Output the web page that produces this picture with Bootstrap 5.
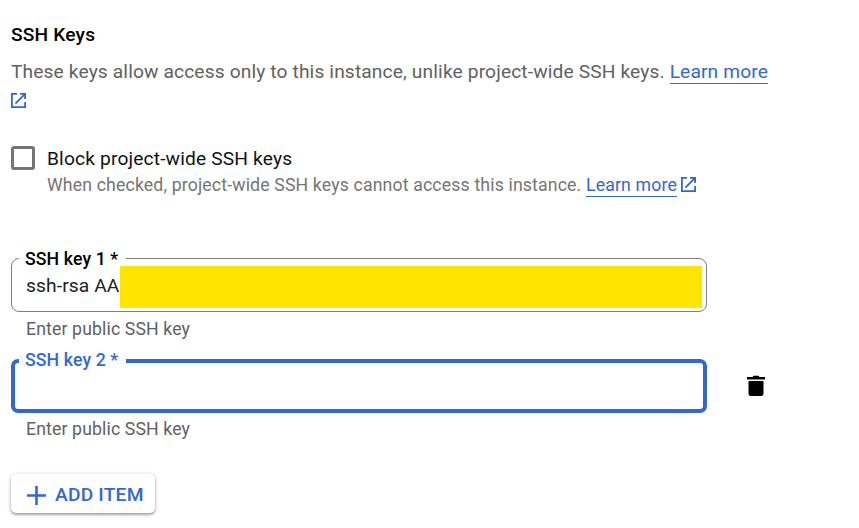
<!DOCTYPE html>
<html lang="en">
<head>
<meta charset="utf-8">
<meta name="viewport" content="width=device-width, initial-scale=1">
<title>SSH Keys</title>
<link href="https://cdn.jsdelivr.net/npm/bootstrap@5.3.0/dist/css/bootstrap.min.css" rel="stylesheet">
<style>
body{font-family:Roboto,"Liberation Sans",sans-serif;color:#000;background:#fff;font-size:19.2px}
.ssh-form{padding:20px 0 0 11px;width:780px}
.ssh-title{font-size:19.2px;font-weight:500;line-height:30px;letter-spacing:.16px}
.ssh-intro{font-size:19.2px;line-height:29px;letter-spacing:.13px;color:#616161;margin-top:7px;width:770px}
.ssh-link{color:#3367d6;text-decoration:none;border-bottom:1px solid #3367d6}
.open-icon{fill:#3367d6;display:inline-block}
.ssh-check{margin-top:31px}
.form-check-input.ssh-box{width:24px;height:24px;border:3px solid #757575;border-radius:3px;margin:0;float:none}
.check-copy{padding-left:12px}
.check-label{font-size:19.2px;line-height:26px;letter-spacing:.15px;color:#111}
.check-note{font-size:17.7px;line-height:27px;letter-spacing:.145px;color:#757575}
.check-note .ssh-link{padding-bottom:1px}
.ssh-fields{margin-top:59px}
.ssh-field{width:696px;height:54px;border:1px solid #808080;border-radius:8px}
.ssh-field.active-field{border:4px solid #3367d6;border-radius:7px}
.field-name{font-size:17.7px;letter-spacing:.1px;font-weight:500;line-height:20px;height:16px;left:7px;top:-10px;width:107px;padding-left:6px;background:#fff}
.active-field .field-name{left:4px;top:-13px;color:#3367d6}
.field-value{font-size:19.2px;letter-spacing:.12px;line-height:24px;padding:15px 0 0 14px;width:108px;color:#212121}
.redaction{background:#ffe500;height:42px;margin:7px 4px 0 0}
.field-help{font-size:17.7px;letter-spacing:.12px;line-height:24px;color:#616161;padding-left:15px;margin-top:5px;height:42px}
.active-row + .field-help{margin-top:4px;height:43px}
.btn.add-item{width:144px;height:39px;margin-top:14px;padding:0 0 0 16px;border:0;border-radius:5px;background:#fff;color:#3367d6;font-size:19.2px;letter-spacing:.2px;font-weight:500;line-height:41px;box-shadow:0 1px 4px rgba(0,0,0,.25),0 2px 2px rgba(0,0,0,.22)}
.add-item svg{margin:3px 9px 0 0}
.add-item span{padding-top:2px}
.trash-icon{margin-left:40px;margin-top:-1px}
</style>
<script src="https://cdn.jsdelivr.net/npm/bootstrap@5.3.0/dist/js/bootstrap.bundle.min.js"></script>
</head>
<body class="min-vh-100 overflow-hidden">
<main class="ssh-form min-vh-100">
  <h1 class="ssh-title mb-0">SSH Keys</h1>
  <p class="ssh-intro mb-0"><span>These keys allow access only to this instance, unlike project-wide SSH keys.</span> <a href="#" class="ssh-link">Learn more</a>
    <svg class="open-icon d-block" width="15" height="29" viewBox="0 -7 15 29"><path d="M0 0h6v1.8H1.8v11.4h11.4V9H15v6H0zM9 0h6v6h-1.8V3.1l-8.1 8.1-1.3-1.3L11.9 1.8H9z"/></svg>
  </p>
  <div class="ssh-check d-flex">
    <input id="block" type="checkbox" class="form-check-input ssh-box flex-shrink-0">
    <div class="check-copy">
      <label for="block" class="check-label d-block text-nowrap">Block project-wide SSH keys</label>
      <div class="check-note text-nowrap d-flex"><span>When checked, project-wide SSH keys cannot access this instance.&nbsp;</span><span><a href="#" class="ssh-link">Learn more</a></span><svg class="open-icon ms-1 mt-1" width="15" height="16" viewBox="0 -1 15 16"><path d="M0 0h6v1.8H1.8v11.4h11.4V9H15v6H0zM9 0h6v6h-1.8V3.1l-8.1 8.1-1.3-1.3L11.9 1.8H9z"/></svg></div>
    </div>
  </div>
  <div class="ssh-fields">
    <div class="ssh-field position-relative d-flex">
      <span class="field-name position-absolute text-nowrap">SSH key 1 *</span>
      <span class="field-value text-nowrap">ssh-rsa AA</span>
      <div class="redaction flex-grow-1"></div>
    </div>
    <div class="field-help">Enter public SSH key</div>
    <div class="active-row d-flex align-items-center">
      <div class="ssh-field active-field position-relative flex-shrink-0"><span class="field-name position-absolute text-nowrap">SSH key 2 *</span></div>
      <svg class="trash-icon" width="18" height="22" viewBox="0 0 18 22"><path d="M0 2h5.5l1-1.3h5l1 1.3H18v2.6H0zM1.5 6h15v12.5a2.5 2.5 0 0 1-2.5 2.5H4a2.5 2.5 0 0 1-2.5-2.5z"/></svg>
    </div>
    <div class="field-help">Enter public SSH key</div>
  </div>
  <button class="btn add-item d-flex align-items-center" type="button"><svg width="19" height="19" viewBox="0 0 19 19"><path d="M9.5 0v19M0 9.5h19" stroke="#3367d6" stroke-width="2.6"/></svg><span>ADD ITEM</span></button>
</main>
</body>
</html>
